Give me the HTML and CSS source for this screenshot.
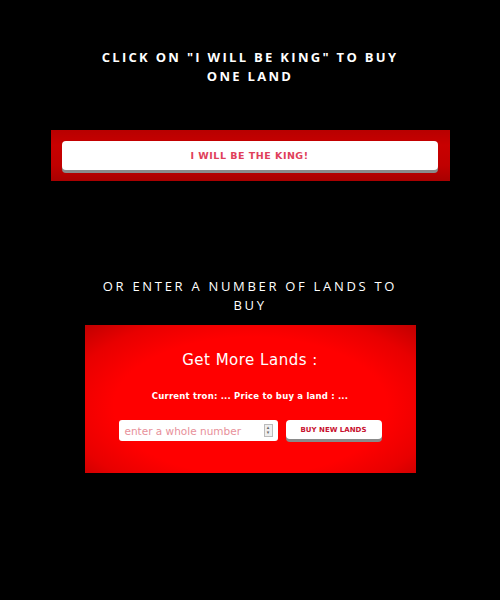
FILE: index.html
```html
<!DOCTYPE html>
<html>
<head>
<meta charset="utf-8">
<link rel="stylesheet" href="styles.css">
</head>
<body>
<main class="page">
  <h2 class="heading heading-bold">CLICK ON "I WILL BE KING" TO BUY ONE LAND</h2>
  <div class="band">
    <button class="king-btn">I WILL BE THE KING!</button>
  </div>
  <h2 class="heading heading-medium">OR ENTER A NUMBER OF LANDS TO BUY</h2>
  <section class="lands">
    <h3 class="lands-title">Get More Lands :</h3>
    <p class="lands-info">Current tron: ... Price to buy a land : ...</p>
    <div class="lands-form">
      <div class="num-input">
        <span class="placeholder">enter a whole number</span>
        <span class="spinner"><span class="arr">▴</span><span class="arr">▾</span></span>
      </div>
      <button class="buy-btn">BUY NEW LANDS</button>
    </div>
  </section>
</main>
</body>
</html>
```

FILE: styles.css
```css
html, body {
  margin: 0;
  padding: 0;
  background: #000;
}
.page {
  width: 500px;
  height: 600px;
  display: flex;
  flex-direction: column;
  align-items: center;
}
.heading {
  margin: 0;
  color: #fff;
  text-align: center;
  font-family: "Open Sans", "DejaVu Sans", sans-serif;
  font-size: 13px;
  line-height: 19px;
}
.heading-bold {
  width: 310px;
  font-weight: 700;
  letter-spacing: 2.3px;
  margin-top: 48px;
}
.heading-medium {
  width: 304px;
  font-weight: 500;
  letter-spacing: 2.7px;
  margin-top: 96px;
}
.band {
  margin-top: 44px;
  width: 399px;
  height: 51px;
  box-sizing: border-box;
  padding: 11px 12px 0 11px;
  background: linear-gradient(180deg, #b80000 0%, #c80000 30%, #c00000 70%, #a80000 100%);
  background-color: #c00000;
}
.king-btn {
  display: block;
  width: 100%;
  height: 29px;
  border: none;
  border-radius: 4px;
  background: #fff;
  box-shadow: 0 3px 0 #8a8a8a;
  color: #e0405a;
  font-family: "DejaVu Sans", sans-serif;
  font-weight: 700;
  font-size: 9.5px;
  letter-spacing: 0.5px;
  padding: 0;
}
.lands {
  margin-top: 10px;
  width: 331px;
  height: 148px;
  box-sizing: border-box;
  background: radial-gradient(ellipse 75% 85% at 50% 55%, #ff0000 55%, #e80000 75%, #b00000 100%);
  display: flex;
  flex-direction: column;
  align-items: center;
  font-family: "DejaVu Sans", sans-serif;
  color: #fff;
}
.lands-title {
  margin: 25px 0 0;
  font-size: 15px;
  font-weight: 400;
  letter-spacing: 0.5px;
  line-height: 20px;
}
.lands-info {
  margin: 20px 0 0;
  font-size: 8.5px;
  font-weight: 700;
  letter-spacing: 0.2px;
  line-height: 12px;
}
.lands-form {
  margin-top: 18px;
  display: flex;
  gap: 8px;
  align-items: flex-start;
}
.num-input {
  width: 159px;
  height: 21px;
  box-sizing: border-box;
  background: #fff;
  border-radius: 3px;
  display: flex;
  align-items: center;
  justify-content: space-between;
  padding: 0 5px 0 6px;
}
.placeholder {
  color: #e8909a;
  font-size: 10.5px;
}
.spinner {
  display: flex;
  flex-direction: column;
  width: 7px;
  height: 11px;
  border: 1px solid #bbb;
  background: #eee;
  font-size: 5px;
  line-height: 5px;
  color: #666;
  align-items: center;
}
.buy-btn {
  width: 96px;
  height: 19px;
  margin-top: 0;
  border: none;
  border-radius: 4px;
  background: #fff;
  box-shadow: 0 3px 0 #8a8a8a;
  color: #c8102e;
  font-family: "DejaVu Sans", sans-serif;
  font-weight: 700;
  font-size: 7px;
  padding: 0;
}
```
